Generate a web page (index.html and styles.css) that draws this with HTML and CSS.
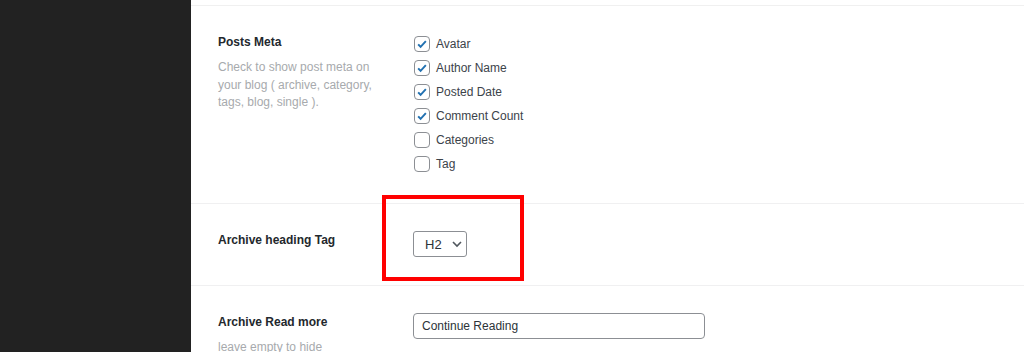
FILE: index.html
```html
<!DOCTYPE html>
<html lang="en">
<head>
    <meta charset="UTF-8">
    <meta name="viewport" content="width=device-width, initial-scale=1.0">
    <title>Blog Settings</title>
    <link rel="stylesheet" href="styles.css">
</head>
<body>
    <div class="sidebar"></div>
    <div class="content">
        <div class="settings">
            <div class="setting-row">
                <div class="setting-label">
                    <h3>Posts Meta</h3>
                    <p class="description">Check to show post meta on your blog ( archive, category, tags, blog, single ).</p>
                </div>
                <ul class="check-list">
                    <li><label class="check-item"><input type="checkbox" checked><span>Avatar</span></label></li>
                    <li><label class="check-item"><input type="checkbox" checked><span>Author Name</span></label></li>
                    <li><label class="check-item"><input type="checkbox" checked><span>Posted Date</span></label></li>
                    <li><label class="check-item"><input type="checkbox" checked><span>Comment Count</span></label></li>
                    <li><label class="check-item"><input type="checkbox"><span>Categories</span></label></li>
                    <li><label class="check-item"><input type="checkbox"><span>Tag</span></label></li>
                </ul>
            </div>

            <div class="setting-row">
                <div class="setting-label">
                    <h3>Archive heading Tag</h3>
                </div>
                <div class="field">
                    <div class="select-box">
                        <span>H2</span>
                        <svg width="12" height="12" viewBox="0 0 12 12">
                            <polyline points="2,4 6,8 10,4" fill="none" stroke="#50575e" stroke-width="1.6"/>
                        </svg>
                    </div>
                </div>
                <!-- annotation highlight -->
                <div class="highlight"></div>
            </div>

            <div class="setting-row">
                <div class="setting-label">
                    <h3>Archive Read more</h3>
                    <p class="description">leave empty to hide</p>
                </div>
                <div class="field">
                    <input type="text" class="text-input" value="Continue Reading">
                </div>
            </div>
        </div>
    </div>
</body>
</html>
```

FILE: styles.css
```css
body {
    font-family: "Liberation Sans", Arial, sans-serif;
    font-size: 12px;
    margin: 0;
    display: flex;
    height: 100vh;
    overflow: hidden;
    background-color: #fff;
    color: #3c434a;
}
.sidebar {
    width: 191px;
    flex-shrink: 0;
    background-color: #222222;
}
.content {
    flex: 1;
    padding-top: 5px;
}
.settings {
    border-top: 1px solid #f0f0f0;
}
.setting-row {
    position: relative;
    display: grid;
    grid-template-columns: 195px 1fr;
    padding: 27px 0 28px 27px;
    border-bottom: 1px solid #f0f0f1;
}
.setting-label h3 {
    margin: 0;
    font-size: 12px;
    font-weight: bold;
    line-height: 18px;
    color: #23282d;
}
.description {
    width: 160px;
    margin: 8px 0 0;
    line-height: 17.5px;
    color: #a7aaad;
}
.check-list {
    list-style: none;
    margin: -1px 0 -1px;
    padding: 0;
}
.check-item {
    display: flex;
    align-items: center;
    height: 24px;
}
.check-item input {
    appearance: none;
    width: 16px;
    height: 16px;
    margin: 0 6px 0 1px;
    border: 1px solid #8c8f94;
    border-radius: 4px;
    background-color: #fff;
    box-sizing: border-box;
}
.check-item input:checked {
    background: #fff url("data:image/svg+xml;utf8,<svg xmlns='http://www.w3.org/2000/svg' viewBox='0 0 20 20'><path d='M4.5 10.5l3.5 3.5 7.5-8' fill='none' stroke='%232271b1' stroke-width='2.8'/></svg>") center / 14px 14px no-repeat;
}
.select-box {
    display: inline-flex;
    align-items: center;
    gap: 9px;
    width: 54px;
    height: 26px;
    padding: 0 0 0 11px;
    border: 1px solid #8c8f94;
    border-radius: 3px;
    box-sizing: border-box;
    color: #2c3338;
    font-size: 13px;
}
.text-input {
    width: 292px;
    height: 26px;
    padding: 0 8px;
    border: 1px solid #8c8f94;
    border-radius: 4px;
    box-sizing: border-box;
    font-family: inherit;
    font-size: 12px;
    color: #2c3338;
}
.highlight {
    position: absolute;
    left: 191px;
    top: -9px;
    width: 142px;
    height: 86px;
    border: 4px solid #ff0000;
    box-sizing: border-box;
}
```
